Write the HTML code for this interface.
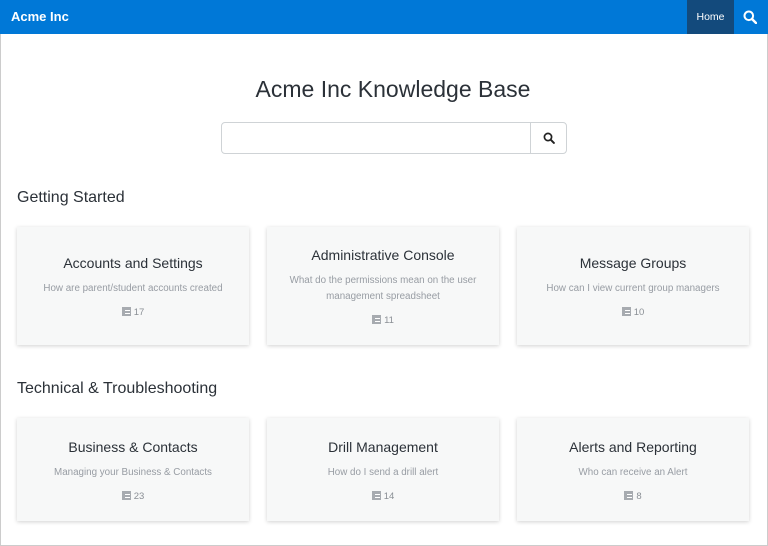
<!DOCTYPE html>
<html><head><style>
*{box-sizing:border-box;margin:0;padding:0}
body{width:768px;height:546px;font-family:"Liberation Sans",sans-serif;background:#fff;position:relative;overflow:hidden}
.bd{position:absolute;left:0;top:0;width:768px;height:546px;border:1px solid #ccc}
.nav{position:absolute;left:0;top:0;width:768px;height:34px;background:#0078d7}
.brand{position:absolute;left:11px;top:9px;color:#fff;font-weight:bold;font-size:13px}
.home{position:absolute;left:687px;top:0;width:47px;height:34px;background:#134a7c;color:#fff;font-size:10.5px;text-align:center;line-height:34px}
.ns{position:absolute;left:743px;top:10px}
h1{position:absolute;left:9px;width:768px;top:76px;text-align:center;font-weight:normal;font-size:23px;color:#2b3138}
.search{position:absolute;left:221px;top:122px;width:346px;height:32px;border:1px solid #cfd3d6;border-radius:4px}
.sbtn{position:absolute;right:0;top:0;width:36px;height:30px;border-left:1px solid #cfd3d6}
h2{position:absolute;left:17px;font-weight:normal;font-size:16px;color:#2b3138}
.card{position:absolute;width:232px;background:#f7f8f8;box-shadow:0 1px 4px rgba(0,0,0,.18);text-align:center}
.t{font-size:14px;color:#2b3138}
.d{font-size:9.8px;color:#979ca3;line-height:16px;margin-top:10px;padding:0 16px}
.c{font-size:9.5px;color:#8a8f95;margin-top:10px}
.c i{display:inline-block;width:9px;height:9px;background:#a7abb0;vertical-align:-1px;margin-right:3px;border:1px solid #a7abb0;background-image:linear-gradient(#fff 0 0),linear-gradient(#fff 0 0);background-size:5px 1px,5px 1px;background-position:2px 2px,2px 5px;background-repeat:no-repeat}
</style></head><body>
<div class="bd"></div>
<div class="nav"><div class="brand">Acme Inc</div><div class="home">Home</div>
<svg class="ns" width="14" height="14" viewBox="0 0 14 14"><circle cx="5.8" cy="5.8" r="4.3" fill="none" stroke="#fff" stroke-width="2"/><path d="M9 9l4 4" stroke="#fff" stroke-width="2.4" stroke-linecap="round"/></svg></div>
<h1>Acme Inc Knowledge Base</h1>
<div class="search"><div class="sbtn"><svg style="position:absolute;left:12px;top:9px" width="12" height="12" viewBox="0 0 12 12"><circle cx="5" cy="5" r="3.6" fill="none" stroke="#222" stroke-width="1.7"/><path d="M7.7 7.7l3.2 3.2" stroke="#222" stroke-width="2" stroke-linecap="round"/></svg></div></div>
<h2 style="top:189px">Getting Started</h2>
<div class="card" style="left:17px;top:227px;height:118px;padding-top:28px"><div class="t">Accounts and Settings</div><div class="d">How are parent/student accounts created</div><div class="c"><i></i>17</div></div>
<div class="card" style="left:267px;top:227px;height:118px;padding-top:20px"><div class="t">Administrative Console</div><div class="d">What do the permissions mean on the user management spreadsheet</div><div class="c"><i></i>11</div></div>
<div class="card" style="left:517px;top:227px;height:118px;padding-top:28px"><div class="t">Message Groups</div><div class="d">How can I view current group managers</div><div class="c"><i></i>10</div></div>
<h2 style="top:380px">Technical &amp; Troubleshooting</h2>
<div class="card" style="left:17px;top:418px;height:103px;padding-top:21px"><div class="t">Business &amp; Contacts</div><div class="d">Managing your Business &amp; Contacts</div><div class="c"><i></i>23</div></div>
<div class="card" style="left:267px;top:418px;height:103px;padding-top:21px"><div class="t">Drill Management</div><div class="d">How do I send a drill alert</div><div class="c"><i></i>14</div></div>
<div class="card" style="left:517px;top:418px;height:103px;padding-top:21px"><div class="t">Alerts and Reporting</div><div class="d">Who can receive an Alert</div><div class="c"><i></i>8</div></div>
</body></html>
